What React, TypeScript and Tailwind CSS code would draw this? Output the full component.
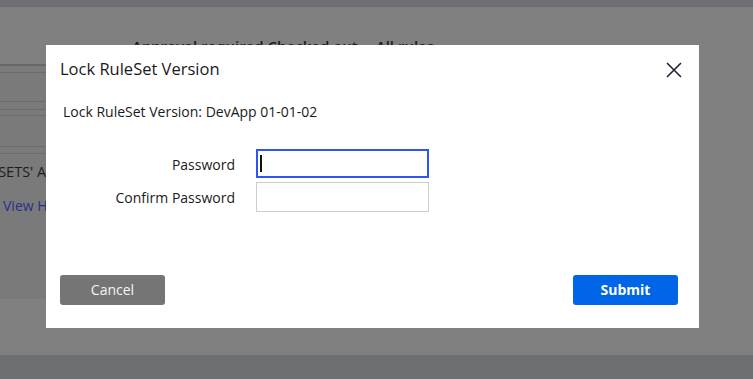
import React from "react";

export default function App() {
  const font = { fontFamily: '"Open Sans", "Noto Sans", sans-serif' };
  return (
    <div className="relative w-[753px] h-[379px] overflow-hidden bg-[#808080]" style={font}>
      <div className="flex flex-col h-full">
        <div className="h-[7px] bg-[#6e6f73]" />
        <div className="flex h-[292px]">
          <div className="w-[125px] flex flex-col">
            <div className="h-[57px]" />
            <div className="flex-1 bg-[#7a7a7a]">
              <div className="h-[2px] bg-[#686868]" />
              <div className="h-[6px]" />
              <div className="h-px bg-[#6c6c6c]" />
              <div className="h-[28px]" />
              <div className="h-px bg-[#6c6c6c]" />
              <div className="h-[7px]" />
              <div className="h-px bg-[#6c6c6c]" />
              <div className="h-[5px]" />
              <div className="h-px bg-[#6c6c6c]" />
              <div className="h-[30px]" />
              <div className="h-px bg-[#6c6c6c]" />
              <div className="h-[6px]" />
              <div className="h-px bg-[#6c6c6c]" />
              <div className="-ml-[37px] mt-[8px] text-[14.5px] leading-[20px] text-[#1d1d1d] whitespace-nowrap">RULESETS' ACCESS</div>
              <div className="ml-[3px] mt-[14px] text-[14px] leading-[20px] text-[#2b2f8c] whitespace-nowrap">View History</div>
            </div>
          </div>
          <div className="flex-1 pl-[7px] pt-[29px]">
            <div className="text-[15px] leading-[20px] font-semibold text-[#1d1d1d] whitespace-nowrap flex gap-[18px]">
              <span>Approval required Checked out</span>
              <span>All rules</span>
            </div>
          </div>
        </div>
        <div className="flex-1" />
        <div className="h-[24px] bg-[#6e6f73]" />
      </div>

      <div className="absolute left-[46px] top-[45px] w-[653px] h-[283px] bg-white flex flex-col">
        <div className="flex items-start justify-between pt-[13px] pl-[14px] pr-[17px]">
          <div className="text-[16.5px] leading-[22px] text-[#1a1a1a]">Lock RuleSet Version</div>
          <svg width="16" height="16" viewBox="0 0 16 16" className="mt-[4px]">
            <path d="M1 1 L15 15 M15 1 L1 15" stroke="#1f2533" strokeWidth="1.6" fill="none" />
          </svg>
        </div>
        <div className="pl-[17px] mt-[22px] text-[14px] leading-[20px] text-[#1a1a1a]">
          Lock RuleSet Version: DevApp 01-01-02
        </div>
        <div className="mt-[27px] flex flex-col gap-[4px]">
          <div className="flex items-center">
            <div className="w-[189px] text-right text-[14px] leading-[20px] pt-[2px] text-[#1a1a1a]">Password</div>
            <div className="ml-[21px] w-[173px] h-[29px] border-2 border-[#2b55f5] flex items-center pl-[2px]">
              <div className="w-[2px] h-[17px] bg-[#111]" />
            </div>
          </div>
          <div className="flex items-center">
            <div className="w-[189px] text-right text-[14px] leading-[20px] pt-[2px] text-[#1a1a1a]">Confirm Password</div>
            <div className="ml-[21px] w-[173px] h-[30px] border border-[#cccccc]" />
          </div>
        </div>
        <div className="flex-1" />
        <div className="flex justify-between pl-[14px] pr-[21px] pb-[23px]">
          <button className="w-[105px] h-[30px] rounded-[3px] bg-[#757575] text-[14px] leading-[20px] text-[#f4f4f4]">Cancel</button>
          <button className="w-[105px] h-[30px] rounded-[3px] bg-[#0066e7] text-[14px] leading-[20px] font-bold text-white">Submit</button>
        </div>
      </div>
    </div>
  );
}
